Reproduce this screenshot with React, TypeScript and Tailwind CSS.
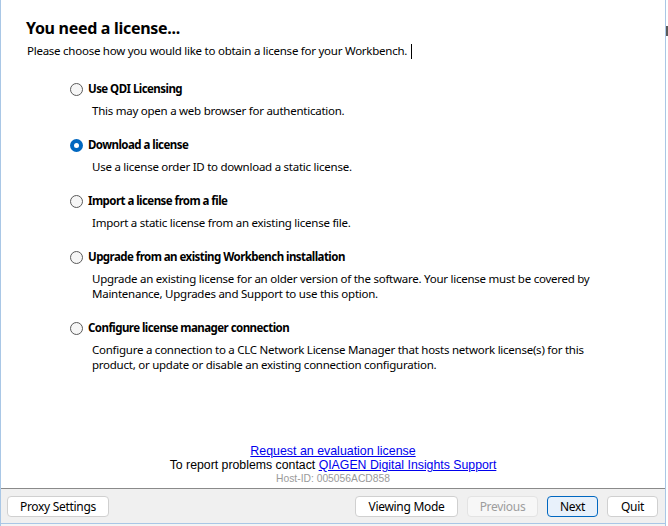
import React from "react";

const seg = { fontFamily: '"Noto Sans", "Open Sans", sans-serif' };
const arial = { fontFamily: '"Liberation Sans", Arial, sans-serif' };

function Radio({ checked }: { checked?: boolean }) {
  if (checked) {
    return (
      <span className="w-[13px] h-[13px] rounded-full bg-[#0067c0] flex items-center justify-center shrink-0">
        <span className="w-[5px] h-[5px] rounded-full bg-white" />
      </span>
    );
  }
  return <span className="w-[13px] h-[13px] rounded-full border border-[#5a5a5a] bg-[#f6f6f6] shrink-0" />;
}

function Option({ label, desc, checked }: { label: string; desc: string[]; checked?: boolean }) {
  return (
    <div className="flex flex-col">
      <div className="flex items-center h-[16px] gap-[5px]">
        <Radio checked={checked} />
        <span className="text-[11.5px] font-bold text-black leading-[16px] tracking-[-0.55px]">{label}</span>
      </div>
      <div className="pl-[22px] pt-[6px] text-[11.5px] leading-[15px] text-black tracking-[-0.25px]">
        {desc.map((d, i) => (
          <div key={i}>{d}</div>
        ))}
      </div>
    </div>
  );
}

function Btn({ children, w, variant }: { children: React.ReactNode; w: string; variant?: "primary" | "disabled" }) {
  const base = "h-[21px] rounded-[4px] border text-[12px] flex items-center justify-center tracking-[-0.3px]";
  const cls =
    variant === "primary"
      ? "border-[#0067c0] bg-[#e8f1fb] text-black"
      : variant === "disabled"
      ? "border-[#e3e3e3] bg-[#f7f7f7] text-[#9d9d9d]"
      : "border-[#d0d0d0] bg-white text-black";
  return <div className={`${base} ${cls} ${w}`}>{children}</div>;
}

export default function App() {
  return (
    <div className="w-[668px] h-[526px] flex bg-white overflow-hidden" style={seg}>
      <div className="w-[666px] h-[526px] flex flex-col border-l border-r border-[#a9c7e6]">
        <div className="flex-1 flex flex-col bg-white">
          <div className="pl-[25px] pt-[16px] text-[16px] font-bold leading-[24px] text-black tracking-[-0.3px]">
            You need a license...
          </div>
          <div className="pl-[26px] pt-[3px] text-[11.5px] leading-[16px] text-black flex items-center tracking-[-0.25px]">
            Please choose how you would like to obtain a license for your Workbench.
            <span className="ml-[4px] w-px h-[15px] bg-black" />
          </div>
          <div className="pl-[69px] pt-[22px] flex flex-col gap-[19px]">
            <Option label="Use QDI Licensing" desc={["This may open a web browser for authentication."]} />
            <Option label="Download a license" checked desc={["Use a license order ID to download a static license."]} />
            <Option label="Import a license from a file" desc={["Import a static license from an existing license file."]} />
            <Option
              label="Upgrade from an existing Workbench installation"
              desc={[
                "Upgrade an existing license for an older version of the software. Your license must be covered by",
                "Maintenance, Upgrades and Support to use this option.",
              ]}
            />
            <Option
              label="Configure license manager connection"
              desc={[
                "Configure a connection to a CLC Network License Manager that hosts network license(s) for this",
                "product, or update or disable an existing connection configuration.",
              ]}
            />
          </div>
          <div className="flex-1" />
          <div className="flex flex-col items-center pb-[2px]" style={arial}>
            <a className="text-[12.4px] leading-[14px] text-[#0000ee] underline">Request an evaluation license</a>
            <div className="text-[12.3px] leading-[14px] text-black">
              To report problems contact <a className="text-[#0000ee] underline">QIAGEN Digital Insights Support</a>
            </div>
            <div className="text-[10.3px] leading-[14px] text-[#9a9a9a]">Host-ID: 005056ACD858</div>
          </div>
        </div>
        <div className="h-[35px] bg-[#f0f0f0] border-t border-[#8a8a8a] flex items-center pl-[6px] pr-[7px] pt-[1px]">
          <Btn w="w-[102px]">Proxy Settings</Btn>
          <div className="flex-1" />
          <div className="flex gap-[9px]">
            <Btn w="w-[103px]">Viewing Mode</Btn>
            <Btn w="w-[71px]" variant="disabled">Previous</Btn>
            <Btn w="w-[51px]" variant="primary">Next</Btn>
            <Btn w="w-[51px]">Quit</Btn>
          </div>
        </div>
        <div className="h-[3px] border-t border-[#a9c7e6] bg-[#f4f4f4]" />
      </div>
      <div className="w-[2px] h-full bg-white flex flex-col">
        <div className="h-[26px]" />
        <div className="h-[10px] bg-[#5a5a5a] w-[2px]" />
      </div>
    </div>
  );
}
